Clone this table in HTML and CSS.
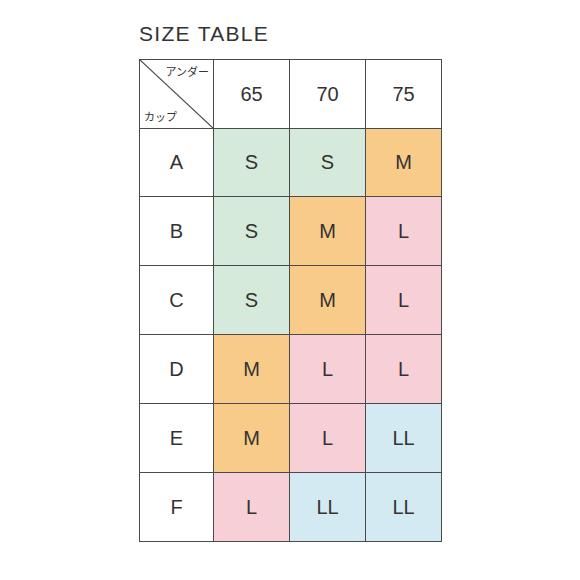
FILE: index.html
```html
<!DOCTYPE html>
<html lang="ja">
<head>
    <meta charset="UTF-8">
    <title>SIZE TABLE</title>
    <link rel="stylesheet" href="styles.css">
</head>
<body>

<div class="page">
    <h1 class="title">SIZE TABLE</h1>

    <table class="size-table">
        <tr>
            <th class="corner">
                <svg class="slash" viewBox="0 0 100 100" preserveAspectRatio="none">
                    <line x1="0" y1="0" x2="100" y2="100" />
                </svg>
                <span class="under">アンダー</span>
                <span class="cup">カップ</span>
            </th>
            <th>65</th>
            <th>70</th>
            <th>75</th>
        </tr>
        <tr class="short">
            <th>A</th>
            <td class="s">S</td>
            <td class="s">S</td>
            <td class="m">M</td>
        </tr>
        <tr>
            <th>B</th>
            <td class="s">S</td>
            <td class="m">M</td>
            <td class="l">L</td>
        </tr>
        <tr>
            <th>C</th>
            <td class="s">S</td>
            <td class="m">M</td>
            <td class="l">L</td>
        </tr>
        <tr>
            <th>D</th>
            <td class="m">M</td>
            <td class="l">L</td>
            <td class="l">L</td>
        </tr>
        <tr>
            <th>E</th>
            <td class="m">M</td>
            <td class="l">L</td>
            <td class="ll">LL</td>
        </tr>
        <tr>
            <th>F</th>
            <td class="l">L</td>
            <td class="ll">LL</td>
            <td class="ll">LL</td>
        </tr>
    </table>
</div>

</body>
</html>
```

FILE: styles.css
```css
html, body {
    margin: 0;
    padding: 0;
    background: #ffffff;
    font-family: "Liberation Sans", Arial, "Noto Sans CJK JP", sans-serif;
    color: #333333;
}

.page {
    padding: 22px 0 0 139px;
}

.title {
    margin: 0 0 13px 0;
    font-size: 21px;
    font-weight: normal;
    letter-spacing: 1.3px;
    line-height: 24px;
    color: #333333;
}

.size-table {
    border-collapse: collapse;
}

.size-table th,
.size-table td {
    border: 1.5px solid #4a4a4a;
    width: 75px;
    height: 68px;
    padding: 0;
    text-align: center;
    vertical-align: middle;
    font-size: 20px;
    font-weight: normal;
    background: #ffffff;
}

.size-table .short th,
.size-table .short td {
    height: 67px;
}

.size-table th:first-child {
    width: 73px;
}

.corner {
    position: relative;
}

.slash {
    position: absolute;
    top: 0;
    left: 0;
    width: 100%;
    height: 100%;
}

.slash line {
    stroke: #4a4a4a;
    stroke-width: 1.2;
    vector-effect: non-scaling-stroke;
}

.under,
.cup {
    position: absolute;
    font-size: 11px;
    line-height: 12px;
}

.under {
    top: 6px;
    right: 4px;
}

.cup {
    bottom: 5px;
    left: 4px;
}

.size-table .s {
    background: #d5eadb;
}

.size-table .m {
    background: #f9cb89;
}

.size-table .l {
    background: #f7cfd6;
}

.size-table .ll {
    background: #d3eaf2;
}
```
